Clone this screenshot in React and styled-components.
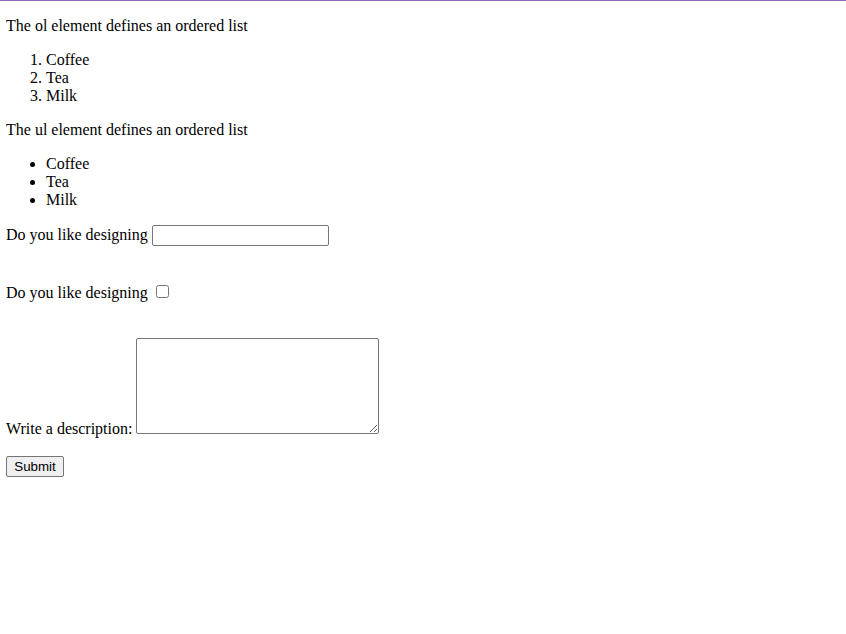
import styled, { createGlobalStyle } from "styled-components";

const GlobalStyle = createGlobalStyle`
  html, body {
    background: #ffffff;
  }
  body {
    margin: 0;
    border-top: 1px solid #8b6bb5;
    font-family: "Liberation Serif", "Times New Roman", serif;
    font-size: 16px;
    color: #000000;
  }
`;

const Page = styled.div`
  padding: 0 6px;
`;

const Text = styled.p`
  margin: 16px 0;
  line-height: normal;
`;

const NumberList = styled.ol`
  margin: 16px 0;
  padding-left: 40px;
`;

const BulletList = styled.ul`
  margin: 16px 0;
  padding-left: 40px;
`;

const Form = styled.form`
  margin: 0;
`;

const Label = styled.label`
  font-family: "Liberation Serif", "Times New Roman", serif;
`;

const TextInput = styled.input`
  width: 177px;
  height: 21px;
  box-sizing: border-box;
  margin: 0;
  padding: 1px 2px;
  border: 1px solid #767676;
  border-radius: 2px;
  font-family: "Liberation Sans", Arial, sans-serif;
  font-size: 13.33px;
`;

const Check = styled.input`
  margin: 3px 3px 3px 4px;
  width: 13px;
  height: 13px;
`;

const Area = styled.textarea`
  width: 243px;
  height: 96px;
  box-sizing: border-box;
  margin: 0;
  border: 1px solid #767676;
  border-radius: 2px;
  font-family: "Liberation Mono", monospace;
  font-size: 13.33px;
  vertical-align: baseline;
`;

const Submit = styled.button`
  width: 58px;
  height: 21px;
  padding: 1px 6px;
  border: 1px solid #767676;
  border-radius: 2px;
  background: #efefef;
  font-family: "Liberation Sans", Arial, sans-serif;
  font-size: 13.33px;
  color: #000000;
`;

export default function App() {
  return (
    <Page>
      <GlobalStyle />
      <Text>The ol element defines an ordered list</Text>
      <NumberList>
        <li>Coffee</li>
        <li>Tea</li>
        <li>Milk</li>
      </NumberList>
      <Text>The ul element defines an ordered list</Text>
      <BulletList>
        <li>Coffee</li>
        <li>Tea</li>
        <li>Milk</li>
      </BulletList>
      <Form onSubmit={(e) => e.preventDefault()}>
        <Label>
          Do you like designing <TextInput type="text" />
        </Label>
        <br />
        <br />
        <br />
        <Label>
          Do you like designing <Check type="checkbox" />
        </Label>
        <br />
        <br />
        <br />
        <Label>
          Write a description: <Area />
        </Label>
        <br />
        <br />
        <Submit type="submit">Submit</Submit>
      </Form>
    </Page>
  );
}
